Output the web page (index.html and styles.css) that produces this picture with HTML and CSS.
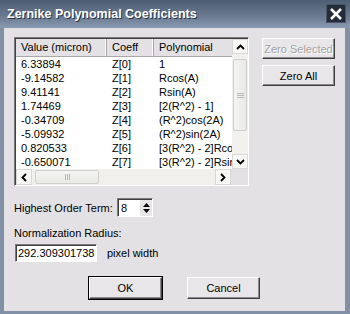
FILE: index.html
```html
<!DOCTYPE html>
<html>
<head>
<meta name="viewport" content="width=device-width, initial-scale=1">
<link rel="stylesheet" href="styles.css">
</head>
<body>

<div class="window">
  <div class="titlebar">
    <span class="title">Zernike Polynomial Coefficients</span>
    <span class="close">
      <svg width="14" height="12" viewBox="0 0 14 12"><path d="M2 1 L12 11 M12 1 L2 11" stroke="#fff" stroke-width="2.6" fill="none"/></svg>
    </span>
  </div>

  <div class="dialog">
    <div class="top">
      <div class="listbox">
        <div class="listmain">
          <div class="grid">
            <div class="head">
              <span class="c1">Value (micron)</span>
              <span class="c2">Coeff</span>
              <span class="c3">Polynomial</span>
            </div>
            <div class="row"><span class="c1">6.33894</span><span class="c2">Z[0]</span><span class="c3">1</span></div>
            <div class="row"><span class="c1">-9.14582</span><span class="c2">Z[1]</span><span class="c3">Rcos(A)</span></div>
            <div class="row"><span class="c1">9.41141</span><span class="c2">Z[2]</span><span class="c3">Rsin(A)</span></div>
            <div class="row"><span class="c1">1.74469</span><span class="c2">Z[3]</span><span class="c3">[2(R^2) - 1]</span></div>
            <div class="row"><span class="c1">-0.34709</span><span class="c2">Z[4]</span><span class="c3">(R^2)cos(2A)</span></div>
            <div class="row"><span class="c1">-5.09932</span><span class="c2">Z[5]</span><span class="c3">(R^2)sin(2A)</span></div>
            <div class="row"><span class="c1">0.820533</span><span class="c2">Z[6]</span><span class="c3">[3(R^2) - 2]Rcos(A)</span></div>
            <div class="row"><span class="c1">-0.650071</span><span class="c2">Z[7]</span><span class="c3">[3(R^2) - 2]Rsin(A)</span></div>
          </div>
          <div class="vscroll">
            <span class="sbtn">
              <svg width="9" height="6" viewBox="0 0 9 6"><path d="M1 5 L4.5 1.5 L8 5" stroke="#000" stroke-width="1.8" fill="none"/></svg>
            </span>
            <span class="vtrack">
              <span class="vthumb"><span class="grip-h"></span></span>
            </span>
            <span class="sbtn">
              <svg width="9" height="6" viewBox="0 0 9 6"><path d="M1 1 L4.5 4.5 L8 1" stroke="#000" stroke-width="1.8" fill="none"/></svg>
            </span>
          </div>
        </div>
        <div class="hscroll">
          <span class="sbtn">
            <svg width="6" height="9" viewBox="0 0 6 9"><path d="M5 1 L1.5 4.5 L5 8" stroke="#000" stroke-width="1.8" fill="none"/></svg>
          </span>
          <span class="htrack">
            <span class="hthumb"><span class="grip-v"></span></span>
          </span>
          <span class="sbtn">
            <svg width="6" height="9" viewBox="0 0 6 9"><path d="M1 1 L4.5 4.5 L1 8" stroke="#000" stroke-width="1.8" fill="none"/></svg>
          </span>
          <span class="corner"></span>
        </div>
      </div>

      <div class="side">
        <button type="button" class="btn" disabled>Zero Selected</button>
        <button type="button" class="btn">Zero All</button>
      </div>
    </div>

    <div class="order">
      <label for="order">Highest Order Term:</label>
      <span class="spin">
        <input type="text" id="order" value="8">
        <span class="arrows">
          <svg width="7" height="4" viewBox="0 0 7 4"><path d="M0 4 L3.5 0 L7 4 Z" fill="#000"/></svg>
          <svg width="7" height="4" viewBox="0 0 7 4"><path d="M0 0 L3.5 4 L7 0 Z" fill="#000"/></svg>
        </span>
      </span>
    </div>

    <div class="radius-label">Normalization Radius:</div>
    <div class="radius">
      <input type="text" class="field" value="292.309301738">
      <span>pixel width</span>
    </div>

    <div class="actions">
      <button type="button" class="btn default">OK</button>
      <button type="button" class="btn">Cancel</button>
    </div>
  </div>
</div>

</body>
</html>
```

FILE: styles.css
```css
body {
    margin: 0;
    font-family: "Liberation Sans", Arial, sans-serif;
    font-size: 11px;
}

.window {
    width: 350px;
    height: 314px;
    background: #8190a6;
    display: flex;
    flex-direction: column;
}

.titlebar {
    height: 28px;
    flex: none;
    background: linear-gradient(#4d5d74, #6b7b92 60%, #8a9ab0);
    display: flex;
    align-items: center;
    justify-content: space-between;
    padding: 0 4px 0 7px;
    box-sizing: border-box;
}

.title {
    color: #fff;
    font-weight: bold;
    font-size: 12.5px;
    text-shadow: 1px 1px 0 #2a3443;
}

.close {
    width: 20px;
    height: 19px;
    background: #242c39;
    border: 1px solid #4a5568;
    box-sizing: border-box;
    display: flex;
    align-items: center;
    justify-content: center;
    margin-top: -1px;
}

.dialog {
    flex: 1;
    background: #e3e1e3;
    margin: 0 5px 3px 4px;
    padding: 9px 10px 0 10px;
    display: flex;
    flex-direction: column;
}

.top {
    display: flex;
    gap: 13px;
}

.listbox {
    width: 236px;
    height: 149px;
    box-sizing: border-box;
    border: 1px solid;
    border-color: #7a7a7a #fff #fff #7a7a7a;
    box-shadow: inset 1px 1px 0 #404040;
    padding: 1px 0 0 1px;
    display: flex;
    flex-direction: column;
    background: #fff;
}

.listmain {
    flex: 1;
    display: flex;
    overflow: hidden;
}

.grid {
    width: 216px;
    overflow: hidden;
}

.head {
    display: flex;
    height: 18px;
    background: #e3e1e3;
    border-bottom: 1px solid #a8a6a8;
    box-sizing: border-box;
}

.head span {
    line-height: 17px;
    padding-left: 5px;
    box-sizing: border-box;
    border-right: 1px solid #a8a6a8;
    box-shadow: inset -1px 0 0 #fff;
}

.row {
    display: flex;
    height: 14px;
    line-height: 14px;
}

.row span {
    padding-left: 5px;
    box-sizing: border-box;
    white-space: nowrap;
    overflow: hidden;
}

.c1 { width: 91px; flex: none; }
.c2 { width: 47px; flex: none; }
.c3 { width: 90px; flex: none; }

.vscroll {
    width: 16px;
    flex: none;
    background: #f1f0ec;
    display: flex;
    flex-direction: column;
}

.sbtn {
    width: 16px;
    height: 15px;
    flex: none;
    box-sizing: border-box;
    background: #f7f7f5;
    border: 1px solid #d8d8d4;
    display: flex;
    align-items: center;
    justify-content: center;
}

.vtrack {
    flex: 1;
    padding-top: 5px;
}

.vthumb {
    display: flex;
    align-items: center;
    justify-content: center;
    height: 70px;
    margin: 0 1px;
    background: linear-gradient(90deg, #f4f4f2, #e9e9e6);
    border: 1px solid #cfcfcb;
    border-radius: 2px;
}

.grip-h {
    width: 7px;
    height: 5px;
    background: repeating-linear-gradient(#b8b8b4 0 1px, transparent 1px 2px);
}

.hscroll {
    height: 16px;
    flex: none;
    display: flex;
    background: #f1f0ec;
}

.hscroll .sbtn {
    height: 16px;
}

.htrack {
    flex: 1;
    padding-left: 3px;
    display: flex;
}

.hthumb {
    width: 62px;
    margin: 1px 0;
    display: flex;
    align-items: center;
    justify-content: center;
    background: linear-gradient(#f4f4f2, #e9e9e6);
    border: 1px solid #cfcfcb;
    border-radius: 2px;
}

.grip-v {
    width: 5px;
    height: 6px;
    background: repeating-linear-gradient(90deg, #b8b8b4 0 1px, transparent 1px 2px);
}

.corner {
    width: 17px;
    flex: none;
    background: #e3e1e3;
}

.side {
    display: flex;
    flex-direction: column;
    gap: 6px;
    padding-top: 1px;
}

.btn {
    width: 73px;
    height: 21px;
    font-family: "Liberation Sans", Arial, sans-serif;
    font-size: 11px;
    color: #000;
    background: #e8e6e8;
    border: 1px solid;
    border-color: #fff #404040 #404040 #fff;
    box-shadow: inset -1px -1px 0 #8a8a8a;
    padding: 0;
    white-space: nowrap;
}

.btn:disabled {
    color: #a2a2a2;
    text-shadow: 1px 1px 0 #fff;
}

.btn.default {
    outline: 1px solid #000;
}

.order {
    display: flex;
    align-items: center;
    margin-top: 12px;
    height: 19px;
}

.order label {
    width: 103px;
    flex: none;
    white-space: nowrap;
}

.spin {
    display: flex;
    width: 36px;
    height: 19px;
    box-sizing: border-box;
    border: 1px solid;
    border-color: #7a7a7a #fff #fff #7a7a7a;
    box-shadow: inset 1px 1px 0 #404040;
    background: #fff;
    padding: 1px 0 0 1px;
}

.spin input {
    width: 18px;
    border: none;
    padding: 0 0 0 2px;
    font-family: "Liberation Sans", Arial, sans-serif;
    font-size: 11px;
    outline: none;
}

.arrows {
    flex: 1;
    display: flex;
    flex-direction: column;
    align-items: center;
    justify-content: space-around;
    background: #e8e6e8;
    border-left: 1px solid #fff;
    padding: 2px 0;
}

.radius-label {
    margin-top: 10px;
}

.radius {
    display: flex;
    align-items: center;
    gap: 10px;
    margin-top: 5px;
}

.field {
    width: 82px;
    height: 18px;
    box-sizing: border-box;
    border: 1px solid;
    border-color: #7a7a7a #fff #fff #7a7a7a;
    box-shadow: inset 1px 1px 0 #404040;
    padding: 0 0 0 2px;
    font-family: "Liberation Sans", Arial, sans-serif;
    font-size: 11px;
    margin-left: 1px;
}

.actions {
    display: flex;
    justify-content: center;
    gap: 25px;
    margin-top: 15px;
}

.actions .btn {
    height: 22px;
}
```
